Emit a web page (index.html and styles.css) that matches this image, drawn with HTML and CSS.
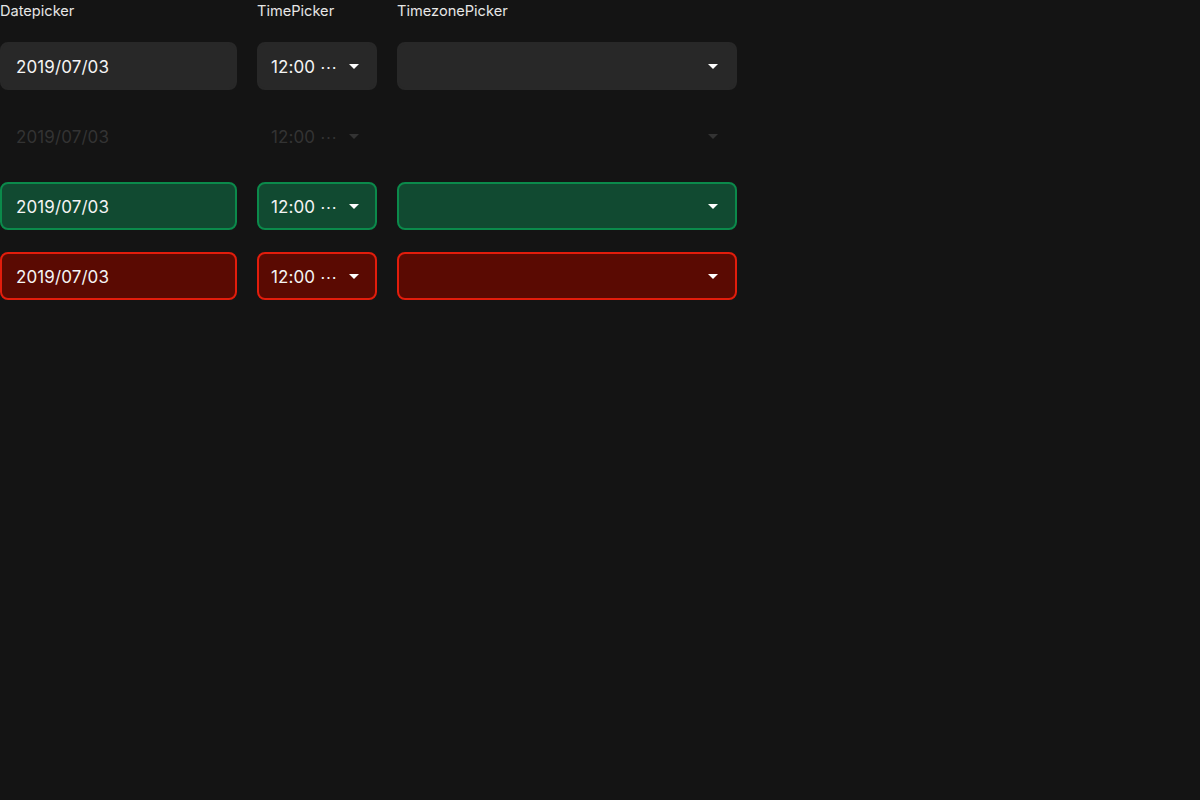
FILE: index.html
```html
<!DOCTYPE html>
<html>
<head>
<meta charset="utf-8">
<link rel="stylesheet" href="styles.css">
</head>
<body>
<div class="page">
  <div class="col col-date">
    <div class="label">Datepicker</div>
    <div class="field"><span class="value">2019/07/03</span></div>
    <div class="field disabled"><span class="value">2019/07/03</span></div>
    <div class="field success"><span class="value">2019/07/03</span></div>
    <div class="field error"><span class="value">2019/07/03</span></div>
  </div>
  <div class="col col-time">
    <div class="label">TimePicker</div>
    <div class="field select"><span class="value">12:00 ⋯</span><svg class="caret" width="10" height="5" viewBox="0 0 10 5"><path d="M0 0H10L5 5Z"/></svg></div>
    <div class="field select disabled"><span class="value">12:00 ⋯</span><svg class="caret" width="10" height="5" viewBox="0 0 10 5"><path d="M0 0H10L5 5Z"/></svg></div>
    <div class="field select success"><span class="value">12:00 ⋯</span><svg class="caret" width="10" height="5" viewBox="0 0 10 5"><path d="M0 0H10L5 5Z"/></svg></div>
    <div class="field select error"><span class="value">12:00 ⋯</span><svg class="caret" width="10" height="5" viewBox="0 0 10 5"><path d="M0 0H10L5 5Z"/></svg></div>
  </div>
  <div class="col col-zone">
    <div class="label">TimezonePicker</div>
    <div class="field select zone"><span class="value"></span><svg class="caret" width="10" height="5" viewBox="0 0 10 5"><path d="M0 0H10L5 5Z"/></svg></div>
    <div class="field select zone disabled"><span class="value"></span><svg class="caret" width="10" height="5" viewBox="0 0 10 5"><path d="M0 0H10L5 5Z"/></svg></div>
    <div class="field select zone success"><span class="value"></span><svg class="caret" width="10" height="5" viewBox="0 0 10 5"><path d="M0 0H10L5 5Z"/></svg></div>
    <div class="field select zone error"><span class="value"></span><svg class="caret" width="10" height="5" viewBox="0 0 10 5"><path d="M0 0H10L5 5Z"/></svg></div>
  </div>
</div>
</body>
</html>
```
FILE: styles.css
```css
html, body {
  margin: 0;
  padding: 0;
  background: #141414;
  height: 100%;
}
body {
  font-family: Inter, "Liberation Sans", sans-serif;
  color: #f2f2f2;
}
.page {
  display: flex;
  gap: 20px;
  align-items: flex-start;
}
.col {
  display: flex;
  flex-direction: column;
  gap: 22px;
}
.col-date { width: 237px; }
.col-time { width: 120px; }
.col-zone { width: 340px; }
.label {
  font-size: 14.6px;
  line-height: 22px;
  height: 20px;
  color: #e6e6e6;
}
.field {
  box-sizing: border-box;
  height: 48px;
  border-radius: 8px;
  background: #282828;
  border: 2px solid #282828;
  display: flex;
  align-items: center;
  padding: 1px 14px 0;
  font-size: 17px;
  letter-spacing: 0.1px;
  color: #f4f4f4;
}
.col-time .field { padding: 1px 16px 0 12px; }
.col-zone .field { padding: 1px 17px 0 14px; }
.value { white-space: nowrap; }
.select { justify-content: space-between; }
.caret { fill: #ffffff; flex: none; }
.disabled {
  background: transparent;
  border-color: transparent;
  color: #333333;
}
.disabled .caret { fill: #333333; }
.success {
  background: #114a31;
  border-color: #0b8a4b;
}
.error {
  background: #5a0a02;
  border-color: #e21d0c;
}
```
